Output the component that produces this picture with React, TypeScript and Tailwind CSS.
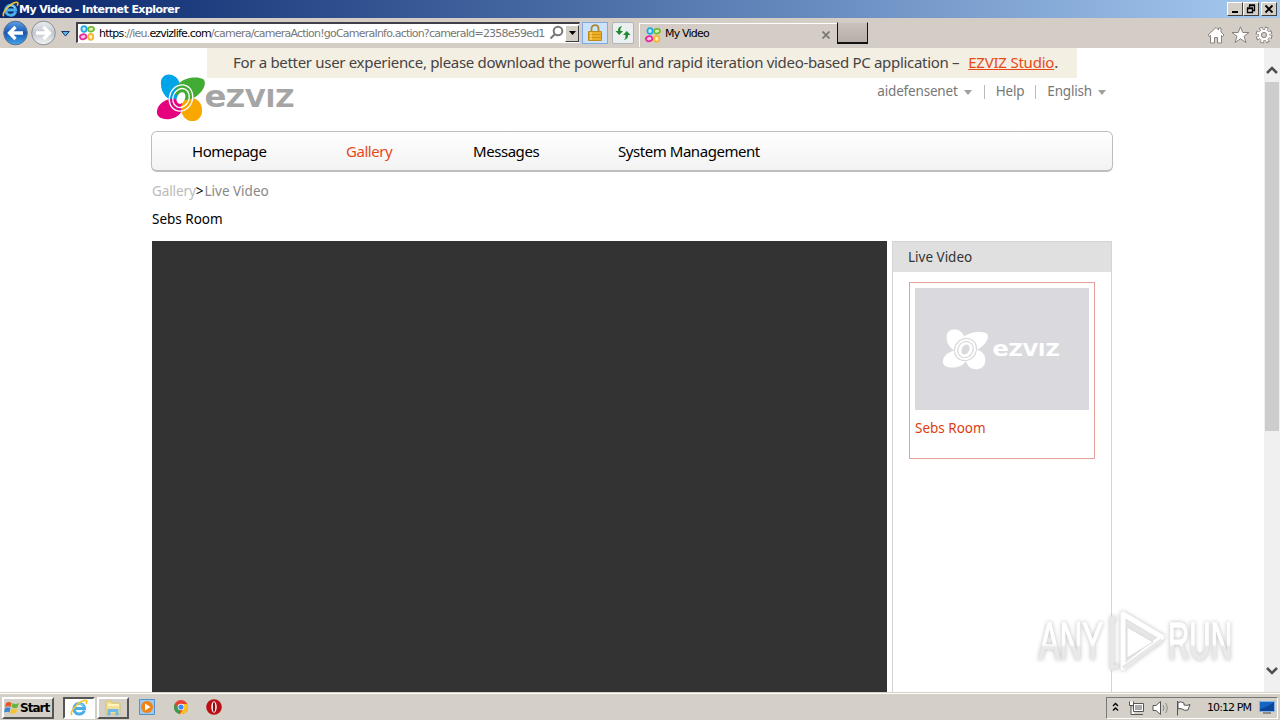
import React from "react";

const Petals = ({ className, mono = false }: { className: string; mono?: boolean }) => {
  const ring = mono ? "#dadade" : "#fff";
  return (
    <svg className={className} viewBox="0 0 50 47" preserveAspectRatio="none">
      <path d="M5 10C4 3 10-1 16 1C23 3 26 12 25 22L19 28C10 24 5 18 5 10Z" fill={mono ? "#fff" : "#00a4e8"} />
      <path d="M1 36C2 29 10 24 18 24L27 29C28 37 22 43 14 44C6 45 0 42 1 36Z" fill={mono ? "#fff" : "#e4007f"} />
      <path d="M28 24C34 21 42 24 45 30C48 37 45 45 38 46C30 47 25 41 25 32Z" fill={mono ? "#fff" : "#f8a800"} />
      <path d="M23 9C29 3 42 2 47 5C52 9 46 18 40 22C35 25 30 26 26 25L20 20C20 15 20 12 23 9Z" fill={mono ? "#fff" : "#41ab34"} />
      <ellipse cx="25" cy="23.500" rx="4" ry="6" fill={ring} transform="rotate(25 25 23.500)" />
      <g fill="none" stroke={ring} strokeWidth="1.3">
        <ellipse cx="25" cy="23.500" rx="8" ry="9.500" transform="rotate(25 25 23.500)" />
        <ellipse cx="25" cy="23.500" rx="11.500" ry="13" transform="rotate(25 25 23.500)" />
      </g>
    </svg>
  );
};

const Wordmark = ({ className, color }: { className: string; color: string }) => (
  <svg className={className} viewBox="0 0 89 19" preserveAspectRatio="none" overflow="visible">
    <g fill={color} fontFamily="DejaVu Sans" fontWeight="bold">
      <text transform="translate(-.5 18.300) scale(1.050 1)" fontSize="30.500">
        e
      </text>
      <text transform="translate(20.500 18.300) scale(1.050 1)" fontSize="25">
        ZVIZ
      </text>
    </g>
  </svg>
);

const Favicon = ({ className }: { className: string }) => (
  <svg className={className} viewBox="0 0 16 16" strokeWidth="1.8">
    <ellipse cx="5" cy="4" rx="2.6" ry="2.9" stroke="#22a8e0" fill="#c5ecfa" />
    <ellipse cx="12" cy="4.2" rx="3" ry="2.3" stroke="#6cbc35" fill="#e0f3b8" transform="rotate(-12 12 4)" />
    <ellipse cx="4.2" cy="11.8" rx="3.2" ry="2.5" stroke="#e5269b" fill="#f7c4e2" transform="rotate(-12 4 12)" />
    <ellipse cx="11.7" cy="11.8" rx="2.6" ry="3" stroke="#f5b730" fill="#fff0b5" />
  </svg>
);

const IeLogo = ({ className }: { className: string }) => (
  <svg className={className} viewBox="0 0 18 18" fill="none">
    <path d="M14.500 11.500C12 17 4 16 4 9.500C4 3 14 2.500 14.500 9.500H5" stroke="#4aaeea" strokeWidth="3" />
    <path d="M13.500 7.500C12 4 7 4 5.500 8" stroke="#a5e8fc" strokeWidth="1" />
    <path d="M2 16C-1 13 8 3 14 1.500C17 .8 17.500 2.500 16 5" stroke="#f2c52c" strokeWidth="1.700" />
  </svg>
);

const Caret = () => (
  <svg className="ml-1.5 mt-0.5 h-[5px] w-2" viewBox="0 0 8 6" preserveAspectRatio="none">
    <path d="M0 0H8L4 6Z" fill="#a0a0a0" />
  </svg>
);

const TitleBar = () => (
  <div className="flex h-[18px] items-center bg-linear-to-r from-[#0a246a] to-[#a6caf0] pl-0.5 pr-[3px]">
    <IeLogo className="h-[17px] w-[17px]" />
    <span className="flex-1 whitespace-nowrap pt-0.5 font-['DejaVu_Sans'] text-[11px] font-bold tracking-[-0.56px] text-white">
      My Video - Internet Explorer
    </span>
    {["min", "restore", "close"].map((b) => (
      <span
        key={b}
        className="flex h-3.5 w-4 items-center justify-center border border-t-white border-l-white border-r-[#404040] border-b-[#404040] bg-[#d4d0c8] last:ml-0.5"
      >
        <svg className="h-2.5 w-3" viewBox="0 0 12 10" fill="none" stroke="#000">
          {b === "min" && <path d="M3 8H9" strokeWidth="2" />}
          {b === "restore" && <path d="M4.500 3V1.500H9.500V6.500H8M4 1H10M2.500 4.500H7.500V8.500H2.500ZM2 4H8" strokeWidth="1.300" />}
          {b === "close" && <path d="M2.500 1.500L9.500 8.500M9.500 1.500L2.500 8.500" strokeWidth="1.800" />}
        </svg>
      </span>
    ))}
  </div>
);

const ToolBar = () => (
  <div className="flex h-[30px] items-start bg-[#d4cdc6] font-['DejaVu_Sans'] text-[11px]">
    <svg className="mt-0.5 h-7 w-[58px]" viewBox="0 0 58 28">
      <defs>
        <linearGradient id="back" x2="0" y2="1">
          <stop stopColor="#5f9fe2" />
          <stop offset=".5" stopColor="#1458b4" />
          <stop offset="1" stopColor="#46a4ec" />
        </linearGradient>
        <linearGradient id="fwd" x2="0" y2="1">
          <stop stopColor="#eceef0" />
          <stop offset=".5" stopColor="#c3c8ce" />
          <stop offset="1" stopColor="#f4f7f9" />
        </linearGradient>
      </defs>
      <circle cx="15.500" cy="13" r="11.800" fill="url(#back)" stroke="#5b6f8b" />
      <circle cx="43.500" cy="13" r="11.800" fill="url(#fwd)" stroke="#8b8f95" />
      <path d="M23 13H9.500M15.500 7L9.500 13L15.500 19" fill="none" stroke="#fff" strokeWidth="3.300" />
      <path d="M36 13H49.500M43.500 7L49.500 13L43.500 19" fill="none" stroke="#fff" strokeWidth="3.300" />
    </svg>
    <svg className="ml-[3px] mt-[13px] h-1.5 w-[9px]" viewBox="0 0 9 6">
      <path d="M.7 .5H8.300L4.500 5Z" fill="#58b6e8" stroke="#12376d" />
    </svg>
    <div className="ml-1.5 mt-1 flex h-[21px] w-[504px] items-center border-2 border-r border-b border-[#404048] border-r-[#d4d0c8] border-b-white bg-white">
      <Favicon className="ml-px h-4 w-4 shrink-0" />
      <div className="ml-[4px] w-[446px] shrink-0 overflow-hidden whitespace-nowrap pt-0.5 tracking-[-0.78px] text-[#777]">
        <span className="text-black">https</span>://ieu.<span className="text-black">ezvizlife.com</span>
        /camera/cameraAction!goCameraInfo.action?cameraId=2358e59ed1
      </div>
      <svg className="ml-1 h-4 w-4 shrink-0" viewBox="0 0 16 16" fill="none" stroke="#777" strokeWidth="2">
        <circle cx="9" cy="6" r="4.300" />
        <path d="M6 9L1.500 13.500" />
      </svg>
      <div className="flex h-[17px] w-4 items-center justify-center border border-t-white border-l-white border-r-[#404040] border-b-[#404040] bg-[#d4d0c8]">
        <svg className="h-1 w-[7px]" viewBox="0 0 7 4">
          <path d="M0 0H7L3.500 4Z" />
        </svg>
      </div>
    </div>
    <div className="ml-0.5 mt-1 flex h-[22px] w-[26px] items-center justify-center border border-[#80aae0] bg-[#cce2fa]">
      <svg className="mb-0.5 h-[17px] w-3.5" viewBox="0 0 14 17">
        <path d="M3.500 8V4.500C3.500 0 10.500 0 10.500 4.500V8" fill="none" stroke="#a78a38" strokeWidth="1.800" />
        <path d="M.5 7.500H13.500V16.500H.5Z" fill="#eeb020" stroke="#c08a1a" />
        <path d="M1 10.500H13M1 13.500H13" stroke="#cc951e" />
        <path d="M3 8V16" stroke="#ffe07e" />
      </svg>
    </div>
    <div className="ml-1 mt-1 flex h-[22px] w-[22px] items-center justify-center rounded-xs border border-[#afb5bc] bg-[#eceff0]">
      <svg className="h-3.5 w-4" viewBox="0 0 16 14" fill="#218a30">
        <path d="M7 0Q2.500 1 3 5H.5L4.200 9L8 5H5.500Q5 2.500 7 0Z" />
        <path d="M9 14Q13.500 13 13 9H15.500L11.800 5L8 9H10.500Q11 11.500 9 14Z" />
      </svg>
    </div>
    <div className="ml-[5px] mt-[5px] flex h-6 w-[198px] items-center border-t border-l border-white pb-0.5 text-black">
      <Favicon className="ml-[5px] h-4 w-4" />
      <span className="ml-1 flex-1 whitespace-nowrap tracking-[-0.8px]">My Video</span>
      <svg className="mr-[7px] h-2 w-2" viewBox="0 0 8 8">
        <path d="M.5 .5L7.500 7.500M7.500 .5L.5 7.500" stroke="#7d7873" strokeWidth="1.800" />
      </svg>
    </div>
    <div className="mt-1 h-[22px] w-[31px] border-x border-t border-b-2 border-t-[#d0cac3] border-x-[#111] border-b-[#111] bg-linear-to-b from-[#c8c2bb] to-[#b5afa8]" />
    <svg className="ml-auto mr-[7px] mt-2 h-[18px] w-[66px]" viewBox="0 0 66 18" fill="#fff" stroke="#87827e">
      <path d="M1 9L9 1.500L11.500 4V2H14V6L17 9L15.500 10.500L14.500 9.500V17H10.500V11.500H7.500V17H3.500V9.500L2 10.500Z" />
      <path d="M33.500 .8L35.700 6.500H42L37 10.300L39 16.500L33.500 12.800L28 16.500L30 10.300L25 6.500H31.300Z" />
      <circle cx="57" cy="9" r="6" fill="none" strokeWidth="5" strokeDasharray="2.9 1.81" />
      <circle cx="57" cy="9" r="5.500" strokeWidth="1" />
      <circle cx="57" cy="9" r="5.800" fill="none" stroke="#fff" strokeWidth="3.200" strokeDasharray="1.900 2.655" strokeDashoffset="-.5" />
      <circle cx="57" cy="9" r="4.600" stroke="#fff" strokeWidth="1.500" />
      <circle cx="57" cy="9" r="2.600" fill="#d4cdc6" />
    </svg>
  </div>
);

const nav = [
  { label: "Homepage", style: "w-[154px] text-black" },
  { label: "Gallery", style: "w-[127px] text-[#e64a19]" },
  { label: "Messages", style: "w-[145px] text-black" },
  { label: "System Management", style: "text-black" },
];

const Page = () => (
  <div className="flex-1 overflow-hidden bg-white font-['Noto_Sans'] text-[13.5px]">
    <div className="mx-auto w-[962px]">
      <div className="relative h-[83px]">
        <div className="ml-14 flex h-[30px] w-[870px] items-center whitespace-nowrap bg-[#f4efe3] pb-0.5 pl-[26px] text-[15px] text-[#444]">
          <span className="tracking-[-0.31px]">
            For a better user experience, please download the powerful and rapid iteration video-based PC application –
          </span>
          <span className="ml-[9px] tracking-[-0.22px] text-[#e64a19] underline">EZVIZ Studio</span>.
        </div>
        <div className="absolute left-[5px] top-[26px] flex">
          <Petals className="h-[48px] w-[50px]" />
          <Wordmark className="-ml-px mt-[15px] h-[19px] w-[90px]" color="#a5a5a5" />
        </div>
        <div className="flex h-[27px] items-center justify-end whitespace-nowrap pr-[7px] text-[13.5px] tracking-[-0.18px] text-[#777]">
          <span>aidefensenet</span>
          <Caret />
          <span className="ml-3 mr-[11px] h-3.5 w-px bg-[#bbb]" />
          <span>Help</span>
          <span className="mx-[11px] h-3.5 w-px bg-[#bbb]" />
          <span>English</span>
          <Caret />
        </div>
      </div>
      <div className="flex h-[41px] items-center rounded-md border border-b-2 border-[#bdbdbd] bg-linear-to-b from-white to-[#f3f3f3] pl-10 text-[15px] tracking-[-0.45px]">
        {nav.map((n) => (
          <span key={n.label} className={n.style}>
            {n.label}
          </span>
        ))}
      </div>
      <div className="flex h-10 items-center pb-px pl-px text-[#888]">
        <span className="tracking-[-0.1px] text-[#bbb]">Gallery</span>
        <span className="text-black">&gt;</span>
        <span className="ml-px">Live Video</span>
      </div>
      <div className="h-[29px] pl-px leading-[14px] text-black">Sebs Room</div>
      <div className="flex pl-px">
        <div className="h-[452px] w-[735px] bg-[#333]" />
        <div className="ml-[5px] h-[452px] w-[220px] border border-b-0 border-[#d4d4d4]">
          <div className="flex h-[30px] items-center bg-[#e0e0e0] pl-[15px] text-[#333]">Live Video</div>
          <div className="ml-4 mt-2.5 h-[177px] w-[186px] border border-[#e8a09a] p-[5px]">
            <div className="flex h-[122px] items-center bg-[#dadade] pl-[27px]">
              <Petals className="h-[41px] w-[47px]" mono />
              <Wordmark className="ml-1 h-[13px] w-[67px]" color="#fff" />
            </div>
            <div className="mt-2 text-[#dd3c10]">Sebs Room</div>
          </div>
        </div>
      </div>
    </div>
  </div>
);

const ScrollBar = () => (
  <div className="flex w-4 flex-col items-center bg-[#f0f0f0]">
    <svg className="mt-[18px] h-2 w-3" viewBox="0 0 12 8" fill="none" stroke="#505050" strokeWidth="2.500">
      <path d="M1 7L6 2L11 7" />
    </svg>
    <div className="mt-2 h-[349px] w-3.5 bg-[#cdcdcd]" />
    <svg className="mb-[17px] mt-auto h-2 w-3" viewBox="0 0 12 8" fill="none" stroke="#505050" strokeWidth="2.500">
      <path d="M1 1L6 6L11 1" />
    </svg>
  </div>
);

const Watermark = () => (
  <svg className="absolute left-[1030px] top-[604px] h-[72px] w-[210px] drop-shadow-[0_0_2px_#bbb]" viewBox="0 0 210 72">
    <defs>
      <linearGradient id="mark" x2="0" y2="1">
        <stop offset=".55" stopColor="#fff" />
        <stop offset=".6" stopColor="#e9e9e9" />
      </linearGradient>
    </defs>
    <g fill="url(#mark)" stroke="url(#mark)" strokeWidth="1.5" fontFamily="Liberation Sans" fontSize="51">
      <text transform="translate(9 55) scale(.61 1)">ANY</text>
      <text transform="translate(138 55) scale(.58 1)">RUN</text>
    </g>
    <g fill="none" strokeLinejoin="round">
      <path d="M93 10L132 33L93 64Z" fill="#f3f3f3" fillOpacity=".6" stroke="#fff" strokeWidth="5" />
      <path d="M86 15L82 14V64L88 62M93 64L132 36" stroke="#e8e8e8" strokeWidth="4" />
      <path d="M97 23L123 38L97 54Z" fill="#fff" stroke="#ddd" />
    </g>
  </svg>
);

const TaskBar = () => (
  <div className="flex h-7 items-center border-t border-[#d4d0c8] bg-[#d4d0c8] shadow-[inset_0_1px_0_#fff] font-['DejaVu_Sans'] text-[11px]">
    <div className="ml-0.5 mt-0.5 flex h-[22px] w-[52px] items-center border-2 border-t-white border-l-white border-r-[#555] border-b-[#555]">
      <svg className="h-4 w-4 shrink-0" viewBox="0 0 16 16">
        <path d="M2 3Q5 1 7.500 3L6.500 7Q4 5.500 1 7Z" fill="#e9562a" />
        <path d="M8.500 3Q11 5 15 3L13.500 7.500Q10 9 7.500 7Z" fill="#66b63b" />
        <path d="M1 8Q4 6.500 6.500 8L5.500 12.500Q3 11 0 12.500Z" fill="#3989d3" />
        <path d="M7.500 8.500Q10 10 13.500 8.500L12 13Q9 14.500 6 13Z" fill="#f4c52c" />
      </svg>
      <span className="text-xs font-bold tracking-[-1px]">Start</span>
    </div>
    <div className="ml-[9px] mt-0.5 flex h-[22px] w-8 items-center justify-center border-2 border-t-[#555] border-l-[#555] border-r-white border-b-white bg-white">
      <IeLogo className="h-[18px] w-[18px]" />
    </div>
    <div className="ml-0.5 mt-0.5 flex h-[22px] w-8 items-center justify-center border-2 border-t-white border-l-white border-r-[#555] border-b-[#555]">
      <svg className="h-4 w-4" viewBox="0 0 16 16">
        <path d="M1 1H6L7 3H15V14H1Z" fill="#f0e09a" stroke="#d6c06c" />
        <path d="M3 5H14" stroke="#fff5bd" strokeWidth="2" />
        <path d="M2.500 15.500V9H13.500V15.500H10.500V12H5.500V15.500Z" fill="#71b9e9" />
      </svg>
    </div>
    <svg className="ml-2.5 h-4 w-4" viewBox="0 0 16 16">
      <path d="M.5 .5H15.500V15.500H.5Z" fill="#9ccaf0" stroke="#5091ce" />
      <circle cx="8" cy="8" r="6" fill="#f08316" />
      <path d="M6 4.500V11.500L11.500 8Z" fill="#fff" />
    </svg>
    <svg className="ml-[19px] h-3.5 w-3.5" viewBox="0 0 14 14">
      <circle cx="7" cy="7" r="7" fill="#e94234" />
      <path d="M1 3.500L6 12L6 14A7 7 0 0 1 1 3.500Z" fill="#2ba24c" />
      <path d="M7 4H13.300A7 7 0 0 1 6 14L9.500 8.500Z" fill="#fbc116" />
      <circle cx="7" cy="7" r="3.300" fill="#fff" />
      <circle cx="7" cy="7" r="2.600" fill="#4285f4" />
    </svg>
    <svg className="ml-[18px] mt-px h-4 w-4" viewBox="0 0 16 16">
      <circle cx="8" cy="8" r="7.800" fill="#b81015" />
      <ellipse cx="8" cy="8" rx="2.700" ry="5.700" fill="#fff" />
      <ellipse cx="8" cy="8" rx="1.200" ry="5" fill="#8d0e12" />
    </svg>
    <div className="ml-auto mr-0.5 mt-0.5 flex h-[22px] w-[172px] items-center border border-t-[#777] border-l-[#777] border-r-white border-b-white">
      <svg className="mb-0.5 ml-[5px] h-2.5 w-[7px]" viewBox="0 0 7 10" fill="none" stroke="#000" strokeWidth="1.300">
        <path d="M1 4L3.500 1.500L6 4M1 8.500L3.500 6L6 8.500" />
      </svg>
      <svg className="ml-[9px] h-4 w-[68px]" viewBox="0 0 68 16" fill="#fff" stroke="#555">
        <path d="M5.500 3.500H15.500V11.500H5.500ZM7 14.500H15M3 6V14.500H7M1.500 1.500V5.500H5.500V1.500" />
        <path d="M7 5H14V10H7Z" fill="#aaa" stroke="none" />
        <path d="M25 5.500H28L32.500 1.500V14.500L28 10.500H25Z" />
        <path d="M35 5Q37 8 35 11M37.500 3Q41 8 37.500 13" fill="none" stroke="#888" />
        <path d="M49.500 1V15.500M50 2.500Q53 1 56 3V5Q59 6 62 4.500L60 10Q56 11 54 9Q52 8 50 9Z" />
      </svg>
      <span className="ml-[11px] whitespace-nowrap pt-px tracking-[-0.9px]">10:12 PM</span>
      <svg className="ml-auto mr-0.5 h-[13px] w-4" viewBox="0 0 16 13">
        <path d="M.5 .5H15.500V10.500H.5Z" fill="#1765c2" stroke="#7fb3e3" />
        <path d="M1 8Q8 7 15 1V10H1Z" fill="#0c459a" />
        <path d="M4 12H12" stroke="#444" />
      </svg>
    </div>
  </div>
);

const App = () => {
  return (
    <div className="relative flex h-[720px] w-[1280px] flex-col overflow-hidden">
      <TitleBar />
      <ToolBar />
      <div className="flex min-h-0 flex-1">
        <Page />
        <ScrollBar />
      </div>
      <TaskBar />
      <Watermark />
    </div>
  );
};

export default App;
